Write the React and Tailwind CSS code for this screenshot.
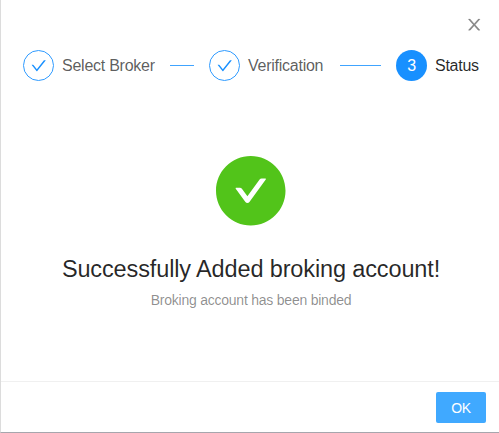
import React from "react";

function CheckIcon() {
  return (
    <svg viewBox="64 64 896 896" className="h-[15.4px] w-[15.4px]" fill="currentColor">
      <path d="M912 190h-69.9c-9.8 0-19.1 4.5-25.1 12.2L404.7 724.5 207 474a32 32 0 0 0-25.1-12.2H112c-6.7 0-10.4 7.7-6.3 12.9l273.9 347c12.8 16.2 37.4 16.2 50.3 0l488.4-618.9c4.1-5.1.4-12.8-6.3-12.8z" />
    </svg>
  );
}

function CloseIcon() {
  return (
    <svg viewBox="64 64 896 896" preserveAspectRatio="none" className="h-[15.4px] w-[16.4px]" fill="currentColor" stroke="currentColor" strokeWidth="16">
      <path d="M563.8 512l262.5-312.9c4.4-5.2.7-13.1-6.1-13.1h-79.8c-4.7 0-9.2 2.1-12.3 5.7L511.6 449.8 295.1 191.7c-3-3.6-7.5-5.7-12.3-5.7H203c-6.8 0-10.5 7.9-6.1 13.1L459.4 512 196.9 824.9A7.95 7.95 0 0 0 203 838h79.8c4.7 0 9.2-2.1 12.3-5.7l216.5-258.1 216.5 258.1c3 3.6 7.5 5.7 12.3 5.7h79.8c6.8 0 10.5-7.9 6.1-13.1L563.8 512z" />
    </svg>
  );
}

function SuccessIcon() {
  return (
    <svg viewBox="64 64 896 896" className="h-[69.5px] w-[69.5px] text-[#52c41a]" fill="currentColor">
      <path d="M512 64C264.6 64 64 264.6 64 512s200.6 448 448 448 448-200.6 448-448S759.4 64 512 64zm193.5 301.7l-210.6 292a31.8 31.8 0 0 1-51.7 0L318.5 484.9c-3.8-5.3 0-12.7 6.5-12.7h46.9c10.2 0 19.9 4.9 25.9 13.3l71.2 98.8 157.2-218c6-8.3 15.6-13.3 25.9-13.3H699c6.5 0 10.3 7.4 6.5 12.7z" />
    </svg>
  );
}

function DoneStep({ title }) {
  return (
    <div className="flex items-center">
      <span className="flex h-[31px] w-[31px] items-center justify-center rounded-full border border-[#2f9bff] text-[#1890ff]">
        <CheckIcon />
      </span>
      <span className="ml-2 whitespace-nowrap text-[#000000a6]">{title}</span>
    </div>
  );
}

export default function App() {
  return (
    <div className="flex h-[433px] w-[499px] flex-col overflow-hidden border-b border-l border-b-[#a6a6ad] border-l-[#dcdcdc] bg-white font-['Liberation_Sans',Arial,sans-serif] text-[#000000d9]">
      <div className="flex h-[50px] justify-end pt-[17px] pr-[16.5px]">
        <button aria-label="Close" className="h-[15.4px] text-[#00000073]">
          <CloseIcon />
        </button>
      </div>
      <div className="flex h-[31px] items-center pl-[22px] text-[16px] tracking-[-0.25px]">
        <div className="flex w-[186px] items-center">
          <DoneStep title="Select Broker" />
          <span className="mr-[15px] ml-[15px] h-px flex-1 bg-[#40a4ff]" />
        </div>
        <div className="flex w-[187px] items-center">
          <DoneStep title="Verification" />
          <span className="mr-[15px] ml-[16.5px] h-px flex-1 bg-[#40a4ff]" />
        </div>
        <div className="flex items-center">
          <span className="flex h-[31px] w-[31px] items-center justify-center rounded-full bg-[#1890ff] text-white">3</span>
          <span className="ml-2">Status</span>
        </div>
      </div>
      <div className="flex flex-1 flex-col items-center pt-[75px] pl-[2px]">
        <SuccessIcon />
        <h1 className="mt-[22.5px] text-[23.5px] leading-[42px] tracking-[-0.13px] whitespace-nowrap">Successfully Added broking account!</h1>
        <p className="text-[14px] leading-[20px] tracking-[-0.23px] text-[#00000073]">Broking account has been binded</p>
      </div>
      <div className="flex h-[51px] items-start justify-end border-t border-[#f0f0f0] pt-[10px] pr-[13px]">
        <button className="h-[31px] w-[50px] rounded-[2px] bg-[#40a9ff] pt-px text-[14px] tracking-[-0.3px] text-white">OK</button>
      </div>
    </div>
  );
}
